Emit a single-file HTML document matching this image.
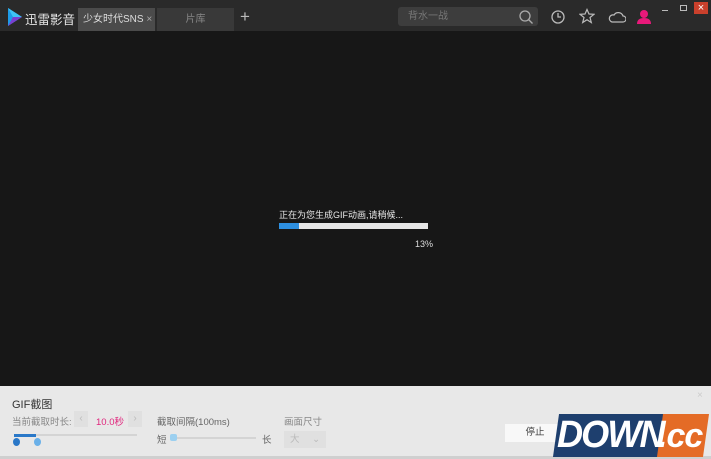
<!DOCTYPE html>
<html><head><meta charset="utf-8"><style>
*{margin:0;padding:0;box-sizing:border-box}
body{width:711px;height:459px;overflow:hidden;background:#171717;font-family:"Liberation Sans","Noto Sans CJK SC",sans-serif;position:relative}
.a{position:absolute;white-space:nowrap}
</style></head><body>
<div class="a" style="left:0;top:0;width:711px;height:31px;background:#2a2a2a"></div>
<svg class="a" style="left:7px;top:7px" width="16" height="20"><polygon points="1,1 15,10 1,19" fill="#1e9be8"/><polygon points="1,1 15,10 6,10" fill="#3ec3f5"/><polygon points="1,19 15,10 6,10" fill="#7a3fd0"/></svg>
<div class="a" style="left:25px;top:9px;font-size:12.5px;color:#e8e8e8">迅雷影音</div>
<div class="a" style="left:78px;top:8px;width:77px;height:23px;background:#4b4b4b;color:#ddd;font-size:10px;line-height:23px;padding-left:5px;overflow:hidden">少女时代SNS <span style="color:#aaa">×</span></div>
<div class="a" style="left:157px;top:8px;width:77px;height:23px;background:#393939;color:#888;font-size:10px;line-height:23px;text-align:center">片库</div>
<div class="a" style="left:240px;top:7px;color:#bbb;font-size:17px">+</div>
<div class="a" style="left:398px;top:7px;width:140px;height:19px;background:#3d3d3d;border-radius:3px;color:#777;font-size:10px;line-height:19px;padding-left:10px">背水一战</div>
<svg class="a" style="left:518px;top:9px" width="16" height="16" fill="none" stroke="#aaa" stroke-width="1.3"><circle cx="7" cy="7" r="5"/><path d="M10.5 10.5l4 4"/></svg>
<svg class="a" style="left:550px;top:9px" width="16" height="16" fill="none" stroke="#bbb" stroke-width="1.3"><circle cx="8" cy="8" r="6"/><path d="M8 4v4h3"/></svg>
<svg class="a" style="left:579px;top:8px" width="16" height="16" fill="none" stroke="#bbb" stroke-width="1.2"><polygon points="8,1.5 10,6 15,6.3 11,9.5 12.3,14.5 8,11.7 3.7,14.5 5,9.5 1,6.3 6,6"/></svg>
<svg class="a" style="left:608px;top:10px" width="18" height="14" fill="none" stroke="#bbb" stroke-width="1.2"><path d="M4 12h11a3 3 0 0 0 0-6 5 5 0 0 0-9-1 3.5 3.5 0 0 0-2 7z"/></svg>
<svg class="a" style="left:637px;top:9px" width="14" height="15" fill="#e8197a"><circle cx="7" cy="5" r="4"/><path d="M0 15q0-6 7-6t7 6z"/></svg>
<div class="a" style="left:662px;top:10px;width:6px;height:1px;background:#bbb"></div>
<div class="a" style="left:680px;top:5px;width:7px;height:6px;border:1px solid #bbb"></div>
<div class="a" style="left:694px;top:2px;width:14px;height:12px;background:#c9402c;color:#fff;font-size:11px;line-height:12px;text-align:center">×</div>
<div class="a" style="left:279px;top:208px;color:#e8e8e8;font-size:9px">正在为您生成GIF动画,请稍候...</div>
<div class="a" style="left:279px;top:223px;width:149px;height:6px;background:#e6e6e6"><div style="width:20px;height:6px;background:#2d8fe0"></div></div>
<div class="a" style="left:410px;top:239px;width:23px;text-align:right;color:#ddd;font-size:9px">13%</div>
<div class="a" style="left:0;top:386px;width:711px;height:73px;background:#e8e8e8"></div>
<div class="a" style="left:0;top:456px;width:711px;height:3px;background:#cfcfcf"></div>
<div class="a" style="left:12px;top:396px;font-size:11px;color:#333">GIF截图</div>
<div class="a" style="left:12px;top:414px;font-size:9.5px;color:#888">当前截取时长:</div>
<div class="a" style="left:74px;top:411px;width:14px;height:16px;background:#e0e0e0;color:#bbb;font-size:10px;text-align:center;line-height:16px">‹</div>
<div class="a" style="left:96px;top:414px;font-size:9.5px;color:#e0247c">10.0秒</div>
<div class="a" style="left:128px;top:411px;width:14px;height:16px;background:#e0e0e0;color:#bbb;font-size:10px;text-align:center;line-height:16px">›</div>
<div class="a" style="left:14px;top:434px;width:123px;height:2px;background:#d4d4d4"></div>
<div class="a" style="left:14px;top:434px;width:22px;height:3px;background:#2a78c8"></div>
<div class="a" style="left:13px;top:438px;width:7px;height:8px;border-radius:50%;background:#2a78c8"></div>
<div class="a" style="left:34px;top:438px;width:7px;height:8px;border-radius:50%;background:#6ab0e8"></div>
<div class="a" style="left:157px;top:414px;font-size:9.5px;color:#666">截取间隔(100ms)</div>
<div class="a" style="left:157px;top:432px;font-size:9.5px;color:#666">短</div>
<div class="a" style="left:170px;top:437px;width:86px;height:2px;background:#d4d4d4"></div>
<div class="a" style="left:170px;top:434px;width:7px;height:7px;background:#9cd0f0;border-radius:2px"></div>
<div class="a" style="left:262px;top:432px;font-size:9.5px;color:#666">长</div>
<div class="a" style="left:284px;top:414px;font-size:9.5px;color:#888">画面尺寸</div>
<div class="a" style="left:284px;top:431px;width:42px;height:17px;background:#e0e0e0;font-size:9.5px;color:#bbb;line-height:17px;padding-left:6px">大 <span style="margin-left:10px">⌄</span></div>
<div class="a" style="left:697px;top:390px;font-size:10px;color:#ccc">×</div>
<div class="a" style="left:505px;top:424px;width:60px;height:18px;background:#f8f8f8;font-size:9.5px;color:#444;text-align:center;line-height:18px">停止</div>
<div class="a" style="left:556px;top:414px;width:110px;height:43px;background:#1e3f6e;transform:skewX(-8deg)"></div>
<div class="a" style="left:660px;top:414px;width:46px;height:43px;background:#e46b26;transform:skewX(-8deg)"></div>
<div class="a" style="left:557px;top:413px;font-size:38px;font-weight:bold;font-style:italic;color:#fff;letter-spacing:-2px;line-height:44px;transform:scaleX(0.95);transform-origin:left">DOWN</div>
<div class="a" style="left:658px;top:413px;font-size:34px;font-weight:bold;font-style:italic;color:#fff;letter-spacing:-1px;line-height:46px">.cc</div>
</body></html>
